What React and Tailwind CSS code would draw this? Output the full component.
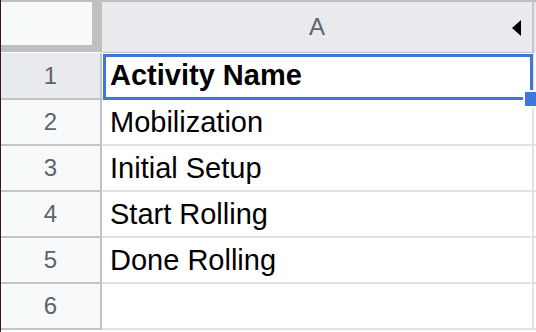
const ROWS = [
  { n: 1, text: 'Activity Name', bold: true },
  { n: 2, text: 'Mobilization' },
  { n: 3, text: 'Initial Setup' },
  { n: 4, text: 'Start Rolling' },
  { n: 5, text: 'Done Rolling' },
  { n: 6, text: '' },
]

export default function App() {
  return (
    <div className="w-[536px] h-[332px] overflow-hidden bg-white border-l border-[#3d1420] font-['Liberation_Sans',Arial,sans-serif]">
      <div className="flex flex-col border-t-2 border-[#c0c0c0]">
        {/* Column header */}
        <div className="flex h-[51px]">
          <div className="w-[101px] shrink-0 bg-[#c0c0c0] h-[50px]">
            <div className="w-[91px] h-[43px] bg-[#f8f9fa]" />
          </div>
          <div className="w-[430px] shrink-0 relative bg-[#e8eaed] border-b border-[#c4c7c5] flex items-center justify-center">
            <span className="text-[24px] text-[#5f6368] leading-none">A</span>
            <svg className="absolute right-[11px] top-[18px]" width="9" height="16" viewBox="0 0 9 16">
              <polygon points="9,0 9,16 0,8" fill="#000" />
            </svg>
          </div>
          <div className="w-[2px] shrink-0 bg-[#c4c7c5]" />
          <div className="flex-1 bg-[#e8eaed]" />
        </div>

        {/* Rows */}
        {ROWS.map((r) => (
          <div key={r.n} className={`flex ${r.n === 1 ? 'h-[47px]' : 'h-[46px]'}`}>
            <div
              className={`w-[101px] shrink-0 flex items-center justify-center border-r-2 border-b-2 border-[#c4c4c4] text-[24px] text-[#5f6368] ${
                r.n === 1 ? 'bg-[#e8eaed]' : 'bg-[#f8f9fa]'
              }`}
            >
              {r.n}
            </div>
            <div className="w-[430px] shrink-0 relative flex items-center pl-[8px] border-b-2 border-[#e2e2e2]">
              <span className={`text-black leading-none ${r.bold ? 'font-bold text-[29px]' : 'text-[29px]'}`}>
                {r.text}
              </span>
              {r.n === 1 && (
                <>
                  <div className="absolute left-[1px] top-[1px] w-[430px] h-[46px] border-[3px] border-[#3b78dc]" />
                  <div className="absolute left-[421px] top-[37px] w-[17px] h-[18px] bg-[#3b78dc] border-2 border-white" />
                </>
              )}
            </div>
            <div className="w-[2px] shrink-0 bg-[#e2e2e2]" />
            <div className="flex-1 border-b-2 border-[#e2e2e2]" />
          </div>
        ))}
      </div>
    </div>
  )
}
